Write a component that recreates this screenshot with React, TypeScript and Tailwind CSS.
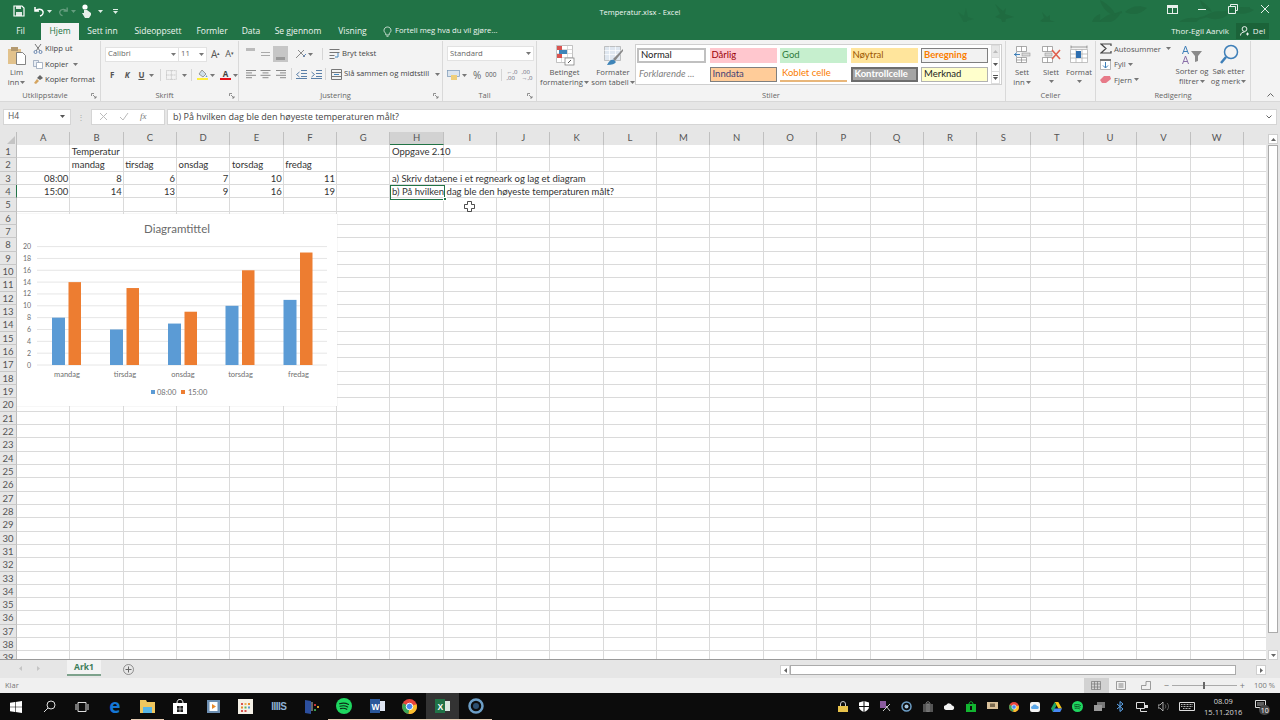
import React from "react";

const UI = "font-['Open_Sans','Noto_Sans',sans-serif]";
const cols = "ABCDEFGHIJKLMNOPQRSTUVW".split("");

const Caret = ({ c = "#777", up = false }: { c?: string; up?: boolean }) => (
  <svg width="5" height="3" viewBox="0 0 5 3" className="shrink-0">
    <path d={up ? "M0 3h5L2.500 0z" : "M0 0h5L2.500 3z"} fill={c} />
  </svg>
);

const Launcher = () => (
  <svg width="6" height="6" viewBox="0 0 6 6" className="absolute right-[3px] top-[3px]">
    <path d="M.5 3V.5H3M2 2l3 3M5 3v2H3" stroke="#777" fill="none" strokeWidth=".8" />
  </svg>
);

const Group = ({ w, label, launcher, children }: { w: number; label: string; launcher?: boolean; children: React.ReactNode }) => (
  <div className="flex h-full shrink-0 flex-col border-r border-[#d9d9d9]" style={{ width: w }}>
    <div className="h-[49px]">{children}</div>
    <div className={`relative h-[11px] text-center text-[7.5px] leading-[11px] text-[#666] ${launcher ? "pr-[10px]" : ""}`}>
      {label}
      {launcher && <Launcher />}
    </div>
  </div>
);

const Lines = ({ a = "l" }: { a?: "l" | "c" | "r" }) => {
  const w = [10, 6, 10, 6];
  return (
    <svg width="11" height="9" viewBox="0 0 11 9">
      {w.map((v, i) => (
        <rect key={i} x={a === "l" ? 0 : a === "c" ? (11 - v) / 2 : 11 - v} y={i * 2.4} width={v} height="1" fill="#8a8a8a" />
      ))}
    </svg>
  );
};

const TitleArt = () => (
  <svg width="330" height="40" viewBox="0 0 330 40" className="absolute right-0 top-0" fill="#1f6b40">
    <path d="M8 12l6 4 2-8 2 9 6 2-7 2-1 6-3-6z" opacity=".7" />
    <path d="M45 4l8 7 3-3-1 6 9 3-8 2-2 8-3-8-6-2 5-3z" />
    <path d="M92 12l5 5 3-2v5l7 3-7 1-3 6-2-7-5-2 4-3z" />
    <path d="M130 40c10-14 22-22 42-28" stroke="#1f6b40" strokeWidth="2" fill="none" />
    <path d="M150 22c6-8 14-10 20-8-4 7-12 11-20 8zM142 30c-2-8 2-14 8-16 1 7-2 13-8 16zM175 12c6-6 14-7 22-4-6 6-14 8-22 4z" />
    <path d="M200 40c20-12 50-26 100-32" stroke="#1f6b40" strokeWidth="2" fill="none" />
    <path d="M225 26c6-8 16-10 24-7-6 8-15 11-24 7zM255 16c8-6 16-6 24-2-7 6-16 7-24 2zM280 10c8-4 16-4 24 0-8 5-16 5-24 0zM235 40c0-6 4-12 12-14 1 6-4 11-12 14z" />
    <path d="M150 0c8 4 14 10 16 16-8-2-14-8-16-16zM250 0c6 4 10 8 12 12-7-2-11-6-12-12z" />
  </svg>
);

const TitleBar = () => (
  <div className="relative h-[22px] bg-[#217346] text-white">
    <TitleArt />
    <div className="relative flex h-full items-center">
      <svg width="12" height="12" viewBox="0 0 12 12" className="ml-[13px]">
        <path d="M1 1h8l2 2v8H1z" fill="none" stroke="#fff" strokeWidth="1.2" />
        <path d="M3 1h5v3H3zM3 7h6v4H3z" fill="#fff" opacity=".85" />
      </svg>
      <svg width="12" height="11" viewBox="0 0 12 11" className="ml-[8px]">
        <path d="M2 1v4h4M2.500 5C4 2.500 9 2.500 10 5.500 10.500 7.500 9 9.500 7 10" fill="none" stroke="#fff" strokeWidth="1.5" />
      </svg>
      <div className="ml-[2px]"><Caret c="#dfeee6" /></div>
      <svg width="11" height="11" viewBox="0 0 12 11" className="ml-[6px] opacity-30">
        <path d="M10 1v4H6M9.500 5C8 2.500 3 2.500 2 5.500 1.500 7.500 3 9.500 5 10" fill="none" stroke="#fff" strokeWidth="1.500" />
      </svg>
      <div className="ml-[2px] opacity-30"><Caret c="#fff" /></div>
      <svg width="11" height="14" viewBox="0 0 11 14" className="ml-[5px]">
        <circle cx="4" cy="3" r="2.600" fill="#fff" />
        <path d="M3 6h3l4 3v2l-2 3H4L1 9l2 0z" fill="#e6f0ea" />
      </svg>
      <div className="ml-[6px]"><Caret c="#dfeee6" /></div>
      <div className="ml-[10px] flex flex-col items-center gap-[1px]">
        <div className="h-px w-[5px] bg-[#dfeee6]" />
        <Caret c="#dfeee6" />
      </div>
    </div>
    <div className="absolute inset-x-0 top-[6px] text-center text-[7.5px] leading-[12px] text-[#f2f7f4]">Temperatur.xlsx - Excel</div>
    <div className="absolute right-[10px] top-[4px] flex items-center gap-[19px]">
      <svg width="11" height="9" viewBox="0 0 11 9"><rect x=".5" y=".5" width="10" height="8" fill="none" stroke="#e8f1ec" /><path d="M0 0h11v3H0zM5 3h1v6H5z" fill="#e8f1ec" /></svg>
      <div className="ml-[1px] h-px w-[8px] bg-[#e8f1ec]" />
      <svg width="10" height="10" viewBox="0 0 10 10" className="ml-[3px]"><path d="M2.500 2.500V.5h7v6H7.500M.5 2.500h7v7h-7z" fill="none" stroke="#e8f1ec" /></svg>
      <svg width="10" height="10" viewBox="0 0 10 10" className="ml-[3px]"><path d="M1 1l8 8M9 1l-8 8" stroke="#e8f1ec" strokeWidth="1" /></svg>
    </div>
  </div>
);

const tabs: [string, number][] = [
  ["Sett inn", 47],
  ["Sideoppsett", 64],
  ["Formler", 44],
  ["Data", 34],
  ["Se gjennom", 60],
  ["Visning", 49],
];

const TabsRow = () => (
  <div className="relative flex h-[18px] items-end bg-[#217346] text-[8.5px] text-[#edf5f0]">
    <div className="flex h-full w-[41px] items-center justify-center">Fil</div>
    <div className="flex h-[17px] w-[38px] items-center justify-center bg-[#f3f3f3] font-medium text-[#217346]">Hjem</div>
    {tabs.map(([t, w]) => (
      <div key={t} className="flex h-full items-center justify-center" style={{ width: w }}>{t}</div>
    ))}
    <div className="ml-[6px] flex h-full items-center gap-[3px] text-[7.7px]">
      <svg width="9" height="11" viewBox="0 0 9 11"><path d="M2.800 7.500C1.500 6.500 1 5.500 1 4.300 1 2.300 2.600 1 4.500 1S8 2.300 8 4.300c0 1.200-.5 2.200-1.800 3.200V9H2.800zM3.500 10.300h2" fill="none" stroke="#e7f1eb" strokeWidth=".8" /></svg>
      <span>Fortell meg hva du vil gjøre...</span>
    </div>
    <div className="ml-auto flex h-full items-center text-[8px]">
      <span>Thor-Egil Aarvik</span>
      <div className="ml-[7px] mr-[11px] flex h-[16px] w-[33px] items-center justify-center gap-[3px] bg-[#1b6339]">
        <svg width="10" height="10" viewBox="0 0 10 10"><circle cx="4.500" cy="3" r="2.400" fill="none" stroke="#fff" strokeWidth=".9" /><path d="M.5 9.500c0-2.500 2-3.500 4-3.500M7.500 6.500v3M6 8h3" fill="none" stroke="#fff" strokeWidth=".9" /></svg>
        <span>Del</span>
      </div>
    </div>
  </div>
);

const Clipboard = () => (
  <Group w={101} label="Utklippstavle" launcher>
    <div className="flex h-full">
      <div className="flex w-[33px] flex-col items-center pt-[5px]">
        <svg width="20" height="19" viewBox="0 0 20 19">
          <rect x="1" y="3" width="13" height="15" fill="#e2c28c" />
          <rect x="4" y="1" width="7" height="4" fill="#b49a70" />
          <path d="M9.500 6.500h6l3 3v9h-9z" fill="#fff" stroke="#666" strokeWidth=".8" />
        </svg>
        <div className="mt-[2px] text-center text-[7.7px] leading-[10px] text-[#555]">Lim</div>
        <div className="flex items-center gap-[1px] text-[7.7px] leading-[10px] text-[#555]">inn <Caret /></div>
      </div>
      <div className="flex flex-col text-[7.7px] leading-[15.500px] text-[#444]">
        <div className="flex h-[15.500px] items-center gap-[2px]">
          <svg width="10" height="11" viewBox="0 0 10 11"><path d="M2 1l5 7M8 1L3 8" stroke="#777" /><circle cx="2.500" cy="9" r="1.500" fill="none" stroke="#6a87b0" /><circle cx="7.500" cy="9" r="1.500" fill="none" stroke="#6a87b0" /></svg>
          Klipp ut
        </div>
        <div className="flex h-[15.500px] items-center gap-[2px]">
          <svg width="10" height="9" viewBox="0 0 10 9"><path d="M.5.500h5v6h-5z" fill="#e9eef5" stroke="#8a9ab0" strokeWidth=".7" /><path d="M3.500 2.500h6v6h-6z" fill="#fff" stroke="#8a9ab0" strokeWidth=".7" /></svg>
          Kopier
          <span className="ml-[3px]"><Caret /></span>
        </div>
        <div className="flex h-[15.500px] items-center gap-[2px]">
          <svg width="10" height="9" viewBox="0 0 10 9"><path d="M1 8l3-4 2 2-3 3z" fill="#d5a560" /><path d="M4 3l3-3 3 3-3 2z" fill="#666" /></svg>
          Kopier format
        </div>
      </div>
    </div>
  </Group>
);

const Sep = ({ h = 12 }: { h?: number }) => <div className="w-px bg-[#d5d5d5]" style={{ height: h }} />;

const FontG = () => (
  <Group w={138} label="Skrift" launcher>
    <div className="flex h-full flex-col pl-[4px] pt-[6px]">
      <div className="flex h-[14px] items-center">
        <div className="flex h-[15px] w-[74px] items-center justify-between border border-[#e2e2e2] bg-white px-[2px] text-[7.7px] text-[#666]">Calibri <Caret /></div>
        <div className="flex h-[15px] w-[28px] items-center justify-between border border-l-0 border-[#e2e2e2] bg-white px-[2px] text-[7.7px] text-[#666]">11 <Caret /></div>
        <span className="ml-[4px] text-[10px] text-[#555]">A<sup className="text-[5px]">▴</sup></span>
        <span className="ml-[5px] text-[9px] text-[#555]">A<sup className="text-[5px]">▾</sup></span>
      </div>
      <div className="mt-[7px] flex h-[14px] items-center text-[8px] font-bold text-[#555]">
        <span className="ml-[5px] w-[15px]">F</span>
        <span className="w-[14px] italic">K</span>
        <span className="w-[11px] underline">U</span>
        <Caret />
        <span className="ml-[6px]"><Sep /></span>
        <svg width="11" height="10" viewBox="0 0 11 10" className="ml-[5px]"><path d="M.5.500h10v9H.5zM5.500.500v9M.5 5h10" fill="none" stroke="#aaa" strokeWidth=".8" strokeDasharray="1 1" /></svg>
        <span className="ml-[5px]"><Caret /></span>
        <span className="ml-[4px]"><Sep /></span>
        <div className="ml-[5px] flex flex-col items-center">
          <svg width="11" height="8" viewBox="0 0 11 8"><path d="M5 0l4 4-3 3-4-3z" fill="#cfdfea" stroke="#777" strokeWidth=".7" /><path d="M9.500 5l1 2h-2z" fill="#5b9bd5" /></svg>
          <div className="h-[2px] w-[11px] bg-[#ffef3b]" />
        </div>
        <span className="ml-[2px]"><Caret /></span>
        <div className="ml-[5px] flex flex-col items-center leading-[8px] text-[#444]">
          <span className="text-[8px]">A</span>
          <div className="h-[2px] w-[11px] bg-[#e8121a]" />
        </div>
        <span className="ml-[2px]"><Caret /></span>
      </div>
    </div>
  </Group>
);

const Align = () => (
  <Group w={204} label="Justering" launcher>
    <div className="flex h-full flex-col pl-[5px] text-[7.7px] text-[#555]">
      <div className="mt-[5px] flex h-[16px] items-center">
        <div className="flex h-[16px] w-[13px] items-start justify-center pt-[2px]"><div className="h-[3px] w-[9px] bg-[#bbb]" /></div>
        <div className="ml-[2px] flex h-[16px] w-[13px] items-center justify-center"><div className="h-[4px] w-[9px] border-y border-[#aaa]" /></div>
        <div className="ml-[1px] flex h-[16px] w-[15px] items-end justify-center bg-[#c6c6c6] pb-[2px]"><div className="h-[3px] w-[9px] bg-[#999]" /></div>
        <svg width="12" height="10" viewBox="0 0 12 10" className="ml-[7px]"><path d="M1 9l8-8M3 1l7 7" stroke="#8a8a8a" /><path d="M8 8l3-3" stroke="#5b87c0" /></svg>
        <span className="ml-[1px]"><Caret /></span>
        <span className="ml-[9px]"><Sep /></span>
        <svg width="11" height="11" viewBox="0 0 11 11" className="ml-[6px]"><path d="M.5.500h10M.5 3.500h10M.5 6.500h5M.5 9.500h5" stroke="#777" /><path d="M9 4v4H6" fill="none" stroke="#4a8ac0" /></svg>
        <span className="ml-[2px] whitespace-nowrap text-[#444]">Bryt tekst</span>
      </div>
      <div className="mt-[4px] flex h-[16px] items-center">
        <div className="flex w-[14px] justify-center"><Lines /></div>
        <div className="flex w-[15px] justify-center"><Lines a="c" /></div>
        <div className="flex w-[15px] justify-center"><Lines a="r" /></div>
        <span className="ml-[3px]"><Sep /></span>
        <svg width="11" height="9" viewBox="0 0 11 9" className="ml-[4px]"><path d="M5 .5h6M5 3.500h6M5 6.500h6M0 8.500h11M3.500 2L.5 4.500l3 2.500" fill="none" stroke="#5a7fa8" /></svg>
        <svg width="11" height="9" viewBox="0 0 11 9" className="ml-[4px]"><path d="M5 .5h6M5 3.500h6M5 6.500h6M0 8.500h11M.5 2l3 2.500L.5 7" fill="none" stroke="#5a7fa8" /></svg>
        <span className="ml-[3px]"><Sep /></span>
        <svg width="11" height="11" viewBox="0 0 11 11" className="ml-[5px]"><path d="M.5.500h10v10H.5zM.5 3.500h10M.5 7.500h10" fill="none" stroke="#777" /><path d="M3 5.500h5" stroke="#4a8ac0" /></svg>
        <span className="ml-[2px] w-[88px] whitespace-nowrap text-[#444]">Slå sammen og midtstill</span>
        <span className="ml-[3px]"><Caret /></span>
      </div>
    </div>
  </Group>
);

const NumberG = () => (
  <Group w={94} label="Tall" launcher>
    <div className="flex h-full flex-col pl-[4px] pt-[5px] text-[#555]">
      <div className="flex h-[15px] w-[87px] items-center justify-between border border-[#e2e2e2] bg-white px-[2px] text-[7.7px] text-[#666]">Standard <Caret /></div>
      <div className="mt-[6px] flex h-[16px] items-center">
        <svg width="13" height="11" viewBox="0 0 13 11"><rect x=".5" y=".5" width="12" height="6" fill="#dbe5ef" stroke="#7a97b5" strokeWidth=".7" /><rect x="4" y="5" width="6" height="5" fill="#efcf7a" /></svg>
        <span className="ml-[2px]"><Caret /></span>
        <span className="ml-[6px] text-[10px] leading-none text-[#666]">%</span>
        <span className="ml-[4px] text-[6.500px]">000</span>
        <span className="ml-[5px]"><Sep /></span>
        <span className="ml-[4px] text-[6px] leading-[6px] text-[#667]">←,0<br />,00</span>
        <span className="ml-[4px] text-[6px] leading-[6px] text-[#667]">,00<br />→,0</span>
      </div>
    </div>
  </Group>
);

const gallery: { t: string; c: string }[] = [
  { t: "Normal", c: "bg-white border-2 border-[#c0c0c0] text-[#222]" },
  { t: "Dårlig", c: "bg-[#ffc7ce] text-[#9c0006]" },
  { t: "God", c: "bg-[#c6efce] text-[#2e7a3a]" },
  { t: "Nøytral", c: "bg-[#ffe59c] text-[#9c5700]" },
  { t: "Beregning", c: "bg-[#f2f2f2] border border-[#7f7f7f] text-[#fa7d00] font-bold" },
  { t: "Forklarende ...", c: "italic text-[#7f7f7f]" },
  { t: "Inndata", c: "bg-[#ffcc99] border border-[#7f7f7f] text-[#3f3f76]" },
  { t: "Koblet celle", c: "border-b-2 border-[#e8b67a] text-[#fa7d00]" },
  { t: "Kontrollcelle", c: "bg-[#a5a5a5] border-2 border-[#6d6d6d] text-white font-bold" },
  { t: "Merknad", c: "bg-[#ffffcc] border border-[#b2b2b2] text-[#222]" },
];

const Styles = () => (
  <Group w={469} label="Stiler">
    <div className="flex h-full text-[7.7px] text-[#555]">
      <div className="flex w-[54px] flex-col items-center pl-[1px] pt-[4px]">
        <svg width="20" height="21" viewBox="0 0 20 21">
          <path d="M1.500.500h16v17h-16z" fill="#fff" stroke="#aaa" strokeWidth=".7" />
          <path d="M1.500 4.500h16M1.500 8.500h16M1.500 12.500h16M6.500.500v17M12.500.500v17" stroke="#ccc" strokeWidth=".7" />
          <rect x="2" y="1" width="5" height="4" fill="#d9534f" />
          <rect x="4" y="5" width="8" height="4" fill="#3e84b8" />
          <rect x="2" y="9" width="5" height="4" fill="#d9534f" />
          <rect x="10" y="13" width="9" height="7" fill="#fff" stroke="#777" strokeWidth=".7" />
          <path d="M13 18l3-3" stroke="#555" />
        </svg>
        <div className="mt-[1px] leading-[10px]">Betinget</div>
        <div className="flex items-center gap-[1px] whitespace-nowrap leading-[10px]">formatering <Caret /></div>
      </div>
      <div className="flex w-[44px] flex-col items-center pt-[4px]">
        <svg width="21" height="21" viewBox="0 0 21 21">
          <path d="M1.500 1.500h16v14h-16z" fill="#dfe7f0" stroke="#aaa" strokeWidth=".7" />
          <path d="M1.500 5.500h16M1.500 9.500h16M6.500 1.500v14M12.500 1.500v14" stroke="#fff" strokeWidth=".7" />
          <path d="M20 4L10 14l2 2L20 6z" fill="#888" />
          <path d="M4 20c2-5 5-6 7-5l2 2c-1 2-4 3-9 3z" fill="#3e84b8" />
        </svg>
        <div className="mt-[1px] leading-[10px]">Formater</div>
        <div className="flex items-center gap-[1px] whitespace-nowrap leading-[10px]">som tabell <Caret /></div>
      </div>
      <div className="mt-[3px] flex h-[41px] w-[367px] border border-[#cfcfcf] bg-white">
        <div className="grid grid-cols-[69px_67px_67px_67px_67px] gap-x-[3.500px] gap-y-[4px] py-[3px] pl-[1px] font-['Lato',sans-serif] text-[9.500px] leading-[12px]">
          {gallery.map((g) => (
            <div key={g.t} className={`flex h-[15px] items-center overflow-hidden whitespace-nowrap pb-[1px] pl-[2px] ${g.c}`}>{g.t}</div>
          ))}
        </div>
        <div className="ml-[3px] flex w-[9px] flex-col">
          <div className="flex h-[13px] items-center justify-center border border-[#ddd] bg-[#e8e8e8]"><Caret up c="#bbb" /></div>
          <div className="flex h-[13px] items-center justify-center border-x border-[#ddd]"><Caret c="#555" /></div>
          <div className="flex h-[13px] flex-col items-center justify-center gap-[1px] border border-[#ddd]"><div className="h-px w-[5px] bg-[#555]" /><Caret c="#555" /></div>
        </div>
      </div>
    </div>
  </Group>
);

const GridIcon = ({ children }: { children?: React.ReactNode }) => (
  <svg width="20" height="19" viewBox="0 0 20 19">{children}</svg>
);

const Cells = () => (
  <Group w={90} label="Celler">
    <div className="flex h-full pl-[1px] text-[7.7px] leading-[10px] text-[#555]">
      <div className="flex w-[30px] flex-col items-center pt-[4px]">
        <GridIcon>
          <path d="M4.500 1.500h10v5h-10zM9.500 1.500v5M4.500 12.500h10v5h-10zM9.500 12.500v5M4.500 15h10" fill="#fff" stroke="#888" strokeWidth=".7" />
          <rect x="10" y="8" width="8" height="3" fill="#d9d9d9" stroke="#888" strokeWidth=".5" />
          <path d="M2 9.500h6M5 7.500l-2.500 2L5 11.500" fill="none" stroke="#3e7fb8" />
        </GridIcon>
        <div className="mt-[3px]">Sett</div>
        <div className="flex items-center gap-[1px]">inn <Caret /></div>
      </div>
      <div className="flex w-[28px] flex-col items-center pt-[4px]">
        <GridIcon>
          <path d="M1.500 1.500h10v5h-10zM6.500 1.500v5M1.500 12.500h10v5h-10zM6.500 12.500v5" fill="#fff" stroke="#888" strokeWidth=".7" />
          <rect x="4" y="8" width="7" height="3" fill="#d9d9d9" stroke="#888" strokeWidth=".5" />
          <path d="M11 5l8 9M19 5l-8 9" stroke="#e0604f" strokeWidth="1.600" />
        </GridIcon>
        <div className="mt-[3px]">Slett</div>
        <div className="mt-[3px]"><Caret /></div>
      </div>
      <div className="flex w-[28px] flex-col items-center pt-[4px]">
        <GridIcon>
          <path d="M1.500 4.500h17v13h-17zM1.500 9h17M1.500 13h17M7 4.500v13M13 4.500v13" fill="#fff" stroke="#aaa" strokeWidth=".7" />
          <rect x="7" y="6" width="5" height="7" fill="#2f6fb0" />
          <path d="M2 2h16M2 .5v3M18 .5v3" stroke="#777" strokeWidth=".7" />
        </GridIcon>
        <div className="mt-[3px]">Format</div>
        <div className="mt-[3px]"><Caret /></div>
      </div>
    </div>
  </Group>
);

const Editing = () => (
  <Group w={155} label="Redigering">
    <div className="flex h-full text-[7.7px] leading-[10px] text-[#555]">
      <div className="flex w-[78px] flex-col pl-[4px]">
        <div className="flex h-[15.500px] items-center">
          <svg width="12" height="11" viewBox="0 0 12 11" className="shrink-0"><path d="M11 3V1H1l5 4.500L1 10h10V8" fill="none" stroke="#444" strokeWidth="1.200" /></svg>
          <span className="ml-[2px] w-[50px]">Autosummer</span>
          <span className="ml-[2px]"><Caret /></span>
        </div>
        <div className="flex h-[15.500px] items-center">
          <svg width="11" height="11" viewBox="0 0 11 11"><path d="M.5.500h10v10H.5z" fill="#fff" stroke="#999" strokeWidth=".7" /><rect x="0" y="0" width="11" height="2" fill="#777" /><path d="M5.500 3v6M3 6.500l2.500 2.500L8 6.500" fill="none" stroke="#3e7fb8" /></svg>
          <span className="ml-[3px]">Fyll</span>
          <span className="ml-[2px]"><Caret /></span>
        </div>
        <div className="flex h-[15.500px] items-center">
          <svg width="11" height="9" viewBox="0 0 11 9"><path d="M4 1l6 0 1 3-5 4H2L0 5z" fill="#e77a88" /></svg>
          <span className="ml-[3px]">Fjern</span>
          <span className="ml-[2px]"><Caret /></span>
        </div>
      </div>
      <div className="flex w-[36px] flex-col items-center pt-[4px]">
        <svg width="22" height="20" viewBox="0 0 22 20">
          <path d="M1.500 9L4.500 1l3 8M2.500 6.500h4" fill="none" stroke="#3e7fb8" />
          <path d="M1.500 19l3-8 3 8M2.500 16.500h4" fill="none" stroke="#8a6fa8" />
          <path d="M10 6h11l-4 5v5l-3 1v-6z" fill="#8a8a8a" />
        </svg>
        <div className="mt-[1px] whitespace-nowrap">Sorter og</div>
        <div className="flex items-center gap-[1px]">filtrer <Caret /></div>
      </div>
      <div className="flex w-[37px] flex-col items-center pt-[3px]">
        <svg width="20" height="21" viewBox="0 0 20 21">
          <circle cx="12" cy="8" r="6.500" fill="none" stroke="#3e7fb8" strokeWidth="1.500" />
          <path d="M7 13l-5 6" stroke="#3e7fb8" strokeWidth="2.500" />
        </svg>
        <div className="mt-[1px] whitespace-nowrap">Søk etter</div>
        <div className="flex items-center gap-[1px] whitespace-nowrap">og merk <Caret /></div>
      </div>
    </div>
  </Group>
);

const Ribbon = () => (
  <div className="flex h-[62px] border-b border-[#d8d8d8] bg-[#f3f3f3] pt-[1px]">
    <Clipboard />
    <FontG />
    <Align />
    <NumberG />
    <Styles />
    <Cells />
    <Editing />
    <div className="flex flex-1 items-end justify-center pb-[4px] pl-[10px]">
      <svg width="7" height="4" viewBox="0 0 7 4"><path d="M.5 3.500l3-3 3 3" fill="none" stroke="#666" /></svg>
    </div>
  </div>
);

const FormulaBar = () => (
  <div className="flex h-[28px] items-start bg-[#e6e6e6] pt-[6.500px]">
    <div className="ml-[3px] flex h-[16px] w-[68px] items-center justify-between border border-[#d5d5d5] bg-white pl-[4px] pr-[5px] text-[8.500px] text-[#555]">H4 <Caret c="#555" /></div>
    <div className="flex h-[16px] w-[20px] items-center justify-center text-[8px] text-[#aaa]">⋮</div>
    <div className="flex h-[16px] w-[74px] items-center border border-[#d5d5d5] bg-white text-[#777]">
      <svg width="9" height="9" viewBox="0 0 9 9" className="ml-[7px]"><path d="M1 1l7 7M8 1L1 8" stroke="#bbb" /></svg>
      <svg width="10" height="9" viewBox="0 0 10 9" className="ml-[11px]"><path d="M1 5l3 3 5-7" fill="none" stroke="#bbb" /></svg>
      <span className="ml-[11px] font-['Liberation_Serif',serif] text-[9px] italic">fx</span>
    </div>
    <div className="ml-[2px] flex h-[16px] w-[1110px] items-center justify-between border border-[#d5d5d5] bg-white pl-[5px] pr-[4px] text-[9px] text-[#444]">
      b) På hvilken dag ble den høyeste temperaturen målt?
      <svg width="6" height="4" viewBox="0 0 6 4"><path d="M.5.500L3 3 5.500.5" fill="none" stroke="#666" /></svg>
    </div>
  </div>
);

const rowData: Record<number, Record<string, string>> = {
  1: { B: "Temperatur", H: "Oppgave 2.10" },
  2: { B: "mandag", C: "tirsdag", D: "onsdag", E: "torsdag", F: "fredag" },
  3: { A: "08:00", B: "8", C: "6", D: "7", E: "10", F: "11", H: "a) Skriv dataene i et regneark og lag et diagram" },
  4: { A: "15:00", B: "14", C: "13", D: "9", E: "16", F: "19", H: "b) På hvilken dag ble den høyeste temperaturen målt?" },
};
const noRight = new Set(["3H", "3I", "3J", "4H", "4I", "4J", "4K"]);

const Chart = () => {
  const d = [
    ["mandag", 8, 14, 52],
    ["tirsdag", 6, 13, 110],
    ["onsdag", 7, 9, 168],
    ["torsdag", 10, 16, 225.500],
    ["fredag", 11, 19, 283.500],
  ] as [string, number, number, number][];
  const y0 = 151;
  const u = 5.92;
  return (
    <div className="absolute left-[17px] top-[82px] h-[192px] w-[320px] bg-white shadow-[0_0_1px_#ccc]">
      <svg width="320" height="192" viewBox="0 0 320 192" fontFamily="Lato, sans-serif">
        <text x="160" y="19" textAnchor="middle" fontSize="11.500" fill="#6b6b6b">Diagramtittel</text>
        {Array.from({ length: 11 }, (_, i) => (
          <g key={i}>
            <line x1="20" x2="310" y1={y0 - i * 2 * u} y2={y0 - i * 2 * u} stroke="#e6e6e6" strokeWidth="1" />
            <text x="14" y={y0 - i * 2 * u + 2.500} textAnchor="end" fontSize="7" fill="#6f6f6f">{i * 2}</text>
          </g>
        ))}
        {d.map(([n, a, b, x]) => (
          <g key={n}>
            <rect x={x - 17} y={y0 - a * u} width="13" height={a * u} fill="#5b9bd5" />
            <rect x={x - 0.500} y={y0 - b * u} width="12.500" height={b * u} fill="#ed7d31" />
            <text x={x - 2} y="163" textAnchor="middle" fontSize="7.500" fill="#6f6f6f">{n}</text>
          </g>
        ))}
        <rect x="134" y="176" width="4" height="4" fill="#5b9bd5" />
        <text x="140" y="181" fontSize="7.500" fill="#6f6f6f">08:00</text>
        <rect x="164" y="176" width="4" height="4" fill="#ed7d31" />
        <text x="171" y="181" fontSize="7.500" fill="#6f6f6f">15:00</text>
      </svg>
    </div>
  );
};

const Sheet = () => (
  <div className="flex h-[530px] overflow-hidden bg-[#e6e6e6] pt-[2px]">
    <div className="relative h-[528px] w-[1266px] overflow-hidden border-b border-[#9a9a9a] bg-white font-['Lato',sans-serif] text-[9.500px] text-[#333]">
      <div className="flex h-[13px] bg-[#e6e6e6]">
        <div className="flex h-full w-[17px] shrink-0 items-end justify-end border-r border-[#bdbdbd] pb-[1px] pr-[1px]">
          <svg width="8" height="8" viewBox="0 0 8 8"><path d="M8 0v8H0z" fill="#c4c4c4" /></svg>
        </div>
        {cols.map((c) => (
          <div key={c} className={`flex h-full w-[53.350px] shrink-0 items-center justify-center border-r border-[#c0c0c0] text-[#555] ${c === "H" ? "border-b border-b-[#217346] bg-[#d2d2d2]" : ""}`}>{c}</div>
        ))}
        <div className="flex-1" />
      </div>
      {Array.from({ length: 39 }, (_, i) => i + 1).map((r) => (
        <div key={r} className="flex h-[13.330px] leading-[11.300px]">
          <div className={`h-full w-[17px] shrink-0 border-b border-r border-b-[#c8c8c8] bg-[#e6e6e6] pt-[1px] text-center text-[#555] ${r === 4 ? "border-r-[#217346] bg-[#d2d2d2]" : "border-r-[#bdbdbd]"}`}>{r}</div>
          {cols.map((c) => {
            const v = rowData[r]?.[c];
            const num = v !== undefined && /^[\d:]+$/.test(v);
            return (
              <div key={c} className={`h-full w-[53.350px] shrink-0 whitespace-nowrap border-b border-[#dadada] pt-[1px] ${noRight.has(r + c) ? "" : "border-r"} ${num ? "pr-[1px] text-right" : "pl-[1.500px]"}`}>{v}</div>
            );
          })}
          <div className="flex-1 border-b border-[#dadada]" />
        </div>
      ))}
      <Chart />
      <div className="absolute left-[390px] top-[53px] h-[14.500px] w-[55px] border-[1.500px] border-[#217346]">
        <div className="absolute -bottom-[2.500px] -right-[2.500px] h-[4px] w-[4px] border border-white bg-[#217346]" />
      </div>
      <svg width="11" height="11" viewBox="0 0 11 11" className="absolute left-[464px] top-[69px]">
        <path d="M3.500.5h4v3h3v4h-3v3h-4v-3h-3v-4h3z" fill="#fff" stroke="#222" strokeWidth=".8" />
      </svg>
    </div>
    <div className="flex h-[528px] flex-1 flex-col items-center bg-[#e6e6e6] pt-[2px]">
      <div className="flex h-[10px] w-[10px] items-center justify-center border border-[#cfcfcf] bg-white"><Caret up c="#666" /></div>
      <div className="mt-[1px] h-[488px] w-[10px] border border-[#ababab] bg-white" />
      <div className="mt-[17px] flex h-[10px] w-[10px] items-center justify-center border border-[#cfcfcf] bg-white"><Caret c="#666" /></div>
    </div>
  </div>
);

const TabBar = () => (
  <div className="flex h-[18px] bg-[#e6e6e6] pr-[14px] text-[#555]">
    <div className="flex h-[17px] w-[67px] items-center gap-[15px] pl-[19px]">
      <svg width="3" height="5" viewBox="0 0 3 5"><path d="M3 0v5L0 2.500z" fill="#c4c4c4" /></svg>
      <svg width="3" height="5" viewBox="0 0 3 5"><path d="M0 0v5l3-2.500z" fill="#c4c4c4" /></svg>
    </div>
    <div className="flex h-[16px] w-[34px] items-center justify-center border-b-2 border-[#7da28c] bg-[#f3f3f3] pt-[1px] text-[8.500px] font-bold text-[#3c7d58]">Ark1</div>
    <div className="flex h-[18px] items-center pl-[22px]">
      <svg width="11" height="11" viewBox="0 0 11 11"><circle cx="5.500" cy="5.500" r="5" fill="none" stroke="#777" strokeWidth=".8" /><path d="M5.500 2.500v6M2.500 5.500h6" stroke="#666" /></svg>
    </div>
    <div className="ml-auto mt-[5px] flex h-[10px] w-[486px] items-center">
      <div className="flex h-[10px] w-[10px] items-center justify-center border border-[#cfcfcf] bg-white">
        <svg width="3" height="5" viewBox="0 0 3 5"><path d="M3 0v5L0 2.500z" fill="#666" /></svg>
      </div>
      <div className="h-[10px] w-[446px] border border-[#ababab] bg-white" />
      <div className="ml-auto flex h-[10px] w-[10px] items-center justify-center border border-[#cfcfcf] bg-white">
        <svg width="3" height="5" viewBox="0 0 3 5"><path d="M0 0v5l3-2.500z" fill="#666" /></svg>
      </div>
    </div>
  </div>
);

const StatusBar = () => (
  <div className="flex h-[15px] items-center bg-[#f0f0f0] text-[7.500px] text-[#777]">
    <span className="ml-[5px]">Klar</span>
    <div className="ml-auto flex h-full items-center">
      <div className="flex h-full w-[25px] items-center justify-center bg-[#d2d2d2]">
        <svg width="10" height="9" viewBox="0 0 10 9"><path d="M.5.500h9v8h-9zM3.500.500v8M6.500.500v8M.5 3h9M.5 6h9" fill="none" stroke="#777" strokeWidth=".7" /></svg>
      </div>
      <div className="flex h-full w-[25px] items-center justify-center">
        <svg width="10" height="9" viewBox="0 0 10 9"><path d="M.5.500h9v8h-9z" fill="none" stroke="#777" strokeWidth=".7" /><rect x="2.500" y="2" width="5" height="5" fill="#bbb" /></svg>
      </div>
      <div className="flex h-full w-[25px] items-center justify-center">
        <svg width="10" height="9" viewBox="0 0 10 9"><path d="M.5 8.500h9V.5H5v4H.5z" fill="none" stroke="#777" strokeWidth=".7" /></svg>
      </div>
      <span className="ml-[5px] text-[9px] leading-none">−</span>
      <div className="relative ml-[3px] h-px w-[65px] bg-[#aaa]">
        <div className="absolute left-[31px] top-[-3px] h-[7px] w-[2px] bg-[#666]" />
      </div>
      <span className="ml-[3px] text-[9px] leading-none">+</span>
      <span className="ml-[9px] w-[26px] text-[7.500px]">100 %</span>
    </div>
  </div>
);

const TaskIcon = ({ on, hi, children }: { on?: boolean; hi?: boolean; children: React.ReactNode }) => (
  <div className={`flex h-full w-[32.800px] items-center justify-center ${on ? "border-b border-[#e8cdb4]" : ""} ${hi ? "bg-[#333]" : ""}`}>{children}</div>
);

const Spotify = ({ s }: { s: number }) => (
  <svg width={s} height={s} viewBox="0 0 16 16"><circle cx="8" cy="8" r="8" fill="#1ed760" /><path d="M3.500 5.800c3-1 6.500-.8 9 .7M4 8.300c2.600-.8 5.500-.5 7.700.7M4.500 10.600c2.200-.6 4.500-.4 6.300.7" fill="none" stroke="#0b2d16" strokeWidth="1.100" strokeLinecap="round" /></svg>
);
const Chrome = ({ s }: { s: number }) => (
  <svg width={s} height={s} viewBox="0 0 16 16"><circle cx="8" cy="8" r="8" fill="#e8453c" /><path d="M8 8L1 4.500A8 8 0 0 0 7 16z" fill="#3aa757" /><path d="M8 8l7.500-2.500A8 8 0 0 1 7 16z" fill="#fbc02d" /><circle cx="8" cy="8" r="3.500" fill="#4a8af4" stroke="#fff" /></svg>
);

const Tray = ({ children }: { children: React.ReactNode }) => (
  <div className="flex h-full w-[21.400px] items-center justify-center">{children}</div>
);

const Taskbar = () => (
  <div className="flex h-[27px] items-center bg-[#0c0c0c] text-white">
    <TaskIcon><svg width="12" height="12" viewBox="0 0 12 12" fill="#fff"><path d="M0 1.700L5 1v4.700H0zM5.600.9L12 0v5.700H5.600zM0 6.300h5V11L0 10.300zM5.600 6.300H12V12l-6.400-.9z" /></svg></TaskIcon>
    <TaskIcon><svg width="13" height="13" viewBox="0 0 13 13"><circle cx="8" cy="5" r="4" fill="none" stroke="#ddd" /><path d="M5 8l-4 4" stroke="#ddd" /></svg></TaskIcon>
    <TaskIcon><svg width="14" height="10" viewBox="0 0 14 10"><path d="M3 .5h8v9H3zM1 2v6M13 2v6" fill="none" stroke="#ddd" /></svg></TaskIcon>
    <TaskIcon><span className="font-['Open_Sans',sans-serif] text-[19px] font-bold leading-none text-[#1477d4]">e</span></TaskIcon>
    <TaskIcon on><svg width="15" height="13" viewBox="0 0 15 13"><path d="M0 0h6l1 2h8v11H0z" fill="#efc75e" /><path d="M3 7h9v6H3z" fill="#58b6e6" /></svg></TaskIcon>
    <TaskIcon><svg width="14" height="15" viewBox="0 0 14 15"><path d="M0 4h14v11H0z" fill="#fff" /><path d="M4 4c0-5 6-5 6 0" fill="none" stroke="#fff" /><path d="M4 7h2.700v2.700H4zM7.300 7H10v2.700H7.300zM4 10.300h2.700V13H4zM7.300 10.300H10V13H7.300z" fill="#222" /></svg></TaskIcon>
    <TaskIcon><svg width="13" height="13" viewBox="0 0 13 13"><rect width="13" height="13" fill="#6d8fb2" /><rect x="2.500" y="2" width="8" height="9" fill="#fff" /><path d="M5 4l4 2.500L5 9z" fill="#e8892a" /></svg></TaskIcon>
    <TaskIcon><svg width="15" height="15" viewBox="0 0 15 15"><rect width="15" height="15" fill="#f4f0e6" /><path d="M3 4h2v2H3z" fill="#d9534f" /><path d="M6.500 4h2v2h-2z" fill="#f0ad4e" /><path d="M10 4h2v2h-2zM3 7.500h2v2H3z" fill="#e8892a" /><path d="M6.500 7.500h2v2h-2z" fill="#5cb85c" /><path d="M10 7.500h2v2h-2z" fill="#5b9bd5" /><path d="M3 11h2v2H3zM6.500 11h2v2h-2z" fill="#d9534f" /></svg></TaskIcon>
    <TaskIcon><span className="font-['Liberation_Sans',sans-serif] text-[10px] font-bold leading-none tracking-[-0.5px] text-[#8fb1d6]">IIIIS</span></TaskIcon>
    <TaskIcon><svg width="16" height="16" viewBox="0 0 16 16"><path d="M1 1l6 1v13l-6-1z" fill="#2c4f9e" /><path d="M7 3h2v9H7z" fill="#666" /><path d="M10 5h2v2h-2z" fill="#c83232" /><path d="M13 7h2v2h-2z" fill="#d9a02b" /><path d="M10 10h2v2h-2z" fill="#3a9c4d" /></svg></TaskIcon>
    <TaskIcon on><Spotify s={16} /></TaskIcon>
    <TaskIcon on><svg width="15" height="14" viewBox="0 0 15 14"><rect x="0" y="0" width="10" height="14" fill="#2b579a" /><rect x="10" y="2" width="5" height="10" fill="#dfe6f2" /><text x="1.500" y="10.500" fontSize="8.500" fontWeight="700" fill="#fff" fontFamily="Liberation Sans">W</text></svg></TaskIcon>
    <TaskIcon on><Chrome s={15} /></TaskIcon>
    <TaskIcon on hi><svg width="15" height="14" viewBox="0 0 15 14"><rect x="0" y="0" width="10" height="14" fill="#217346" /><rect x="10" y="2" width="5" height="10" fill="#d9e8de" /><text x="2.500" y="10.500" fontSize="8.500" fontWeight="700" fill="#fff" fontFamily="Liberation Sans">X</text></svg></TaskIcon>
    <TaskIcon on><svg width="16" height="16" viewBox="0 0 16 16"><circle cx="8" cy="8" r="6.500" fill="none" stroke="#6d9fc7" strokeWidth="2.500" /><circle cx="8" cy="8" r="3" fill="#2c4f70" /></svg></TaskIcon>

    <div className="ml-[340px] flex h-full items-center">
      <Tray><svg width="10" height="11" viewBox="0 0 10 11"><path d="M2.500 5V3a2.500 2.500 0 0 1 5 0v2" fill="none" stroke="#ccc" /><rect y="5" width="10" height="6" fill="#e8c24a" /></svg></Tray>
      <Tray><svg width="10" height="11" viewBox="0 0 10 11"><path d="M0 1.500L5 0l5 1.500V6c0 2.500-2.500 4-5 5-2.500-1-5-2.500-5-5z" fill="#fff" /><path d="M4.500 0h1v11h-1zM0 5h10v1H0z" fill="#0c0c0c" /></svg></Tray>
      <Tray><svg width="11" height="11" viewBox="0 0 11 11"><rect width="6" height="7" fill="#8a5a9e" /><path d="M3 10l7-7M6 5l4 5" stroke="#ccc" /></svg></Tray>
      <Tray><svg width="11" height="11" viewBox="0 0 11 11"><circle cx="5.500" cy="5.500" r="4.500" fill="none" stroke="#6d9fc7" strokeWidth="1.500" /><circle cx="5.500" cy="5.500" r="2" fill="#a5c6e0" /></svg></Tray>
      <Tray><svg width="10" height="11" viewBox="0 0 10 11"><rect y="3" width="10" height="8" fill="#555" /><path d="M3 3c0-3 4-3 4 0M4 3h2v8H4z" fill="none" stroke="#888" /></svg></Tray>
      <Tray><svg width="11" height="7" viewBox="0 0 11 7"><path d="M2.500 7a2.500 2.500 0 0 1-.3-5A3.200 3.200 0 0 1 8 2.500 2.300 2.300 0 0 1 8.500 7z" fill="#f2f2f2" /></svg></Tray>
      <Tray><svg width="10" height="11" viewBox="0 0 10 11"><rect y="3" width="10" height="8" fill="#12b530" /><path d="M3 3c0-3 4-3 4 0" fill="none" stroke="#12b530" /><rect x="4" y="5" width="2" height="4" fill="#0c0c0c" /></svg></Tray>
      <Tray><svg width="11" height="9" viewBox="0 0 11 9"><rect width="11" height="7" fill="#d8c09a" /><rect x="3" y="1.500" width="5" height="3.500" fill="#7a6a50" /></svg></Tray>
      <Tray><Chrome s={10} /></Tray>
      <Tray><svg width="10" height="10" viewBox="0 0 10 10"><rect width="10" height="10" rx="2" fill="#f4f4f4" /><path d="M2.500 7a1.500 1.500 0 0 1 0-3A2.500 2.500 0 0 1 7 4a1.500 1.500 0 0 1 .5 3z" fill="#5ba8ea" /></svg></Tray>
      <Tray><svg width="11" height="10" viewBox="0 0 11 10"><path d="M3.700 0h3.600L11 6.500H7.400z" fill="#f5c518" /><path d="M3.700 0L0 6.500 1.800 10l3.700-6.500z" fill="#1fa463" /><path d="M1.800 10h7.400L11 6.500H3.600z" fill="#4688f4" /></svg></Tray>
      <Tray><Spotify s={11} /></Tray>
      <Tray><svg width="11" height="9" viewBox="0 0 11 9"><rect x="3" width="8" height="6" fill="#777" /><rect y="3" width="8" height="6" fill="#999" /></svg></Tray>
      <Tray><svg width="7" height="11" viewBox="0 0 7 11"><path d="M0 3l6 5-3 2.500v-10L6 3 0 8" fill="none" stroke="#5fa8f0" /></svg></Tray>
      <Tray><svg width="12" height="10" viewBox="0 0 12 10"><path d="M.5.500h8v6h-8zM4.500 7v2.500H11" fill="none" stroke="#ddd" /><rect x="9" y="3" width="3" height="3" fill="#ddd" /></svg></Tray>
      <Tray><svg width="11" height="9" viewBox="0 0 11 9"><path d="M0 3h2l3-3v9L2 6H0z" fill="none" stroke="#ccc" strokeWidth=".8" /><path d="M7 2.500c1 1 1 3 0 4M9 1c2 2 2 5 0 7" fill="none" stroke="#888" strokeWidth=".7" /></svg></Tray>
      <div className="ml-[5px] flex h-full w-[16px] items-center justify-center">
        <svg width="16" height="9" viewBox="0 0 16 9"><path d="M.5.500h15v8H.5z" fill="none" stroke="#ddd" /><path d="M2 2.500h12M2 4.500h12M4 6.500h8" stroke="#ddd" strokeWidth=".8" strokeDasharray="1 .5" /></svg>
      </div>
      <div className="ml-[6px] w-[44px] whitespace-nowrap text-center text-[7.500px] leading-[11px] text-[#d8d8d8]">
        <div>08.09</div>
        <div>15.11.2016</div>
      </div>
      <div className="relative ml-[5px] flex h-full w-[20px] items-center justify-center">
        <svg width="11" height="10" viewBox="0 0 11 10" className="-mt-[3px]"><path d="M.5.500h10v7H7L5 9.500v-2H.5z" fill="none" stroke="#ddd" /><path d="M2 3h7M2 5h7" stroke="#ddd" strokeWidth=".8" /></svg>
        <span className="absolute right-[0px] top-[12px] flex h-[10px] w-[11px] items-center justify-center rounded-full bg-[#444] text-[7px] leading-none">10</span>
      </div>
    </div>
  </div>
);

export default function App() {
  return (
    <div className={`h-[720px] w-[1280px] overflow-hidden bg-white ${UI}`}>
      <TitleBar />
      <TabsRow />
      <Ribbon />
      <FormulaBar />
      <Sheet />
      <TabBar />
      <StatusBar />
      <Taskbar />
    </div>
  );
}
